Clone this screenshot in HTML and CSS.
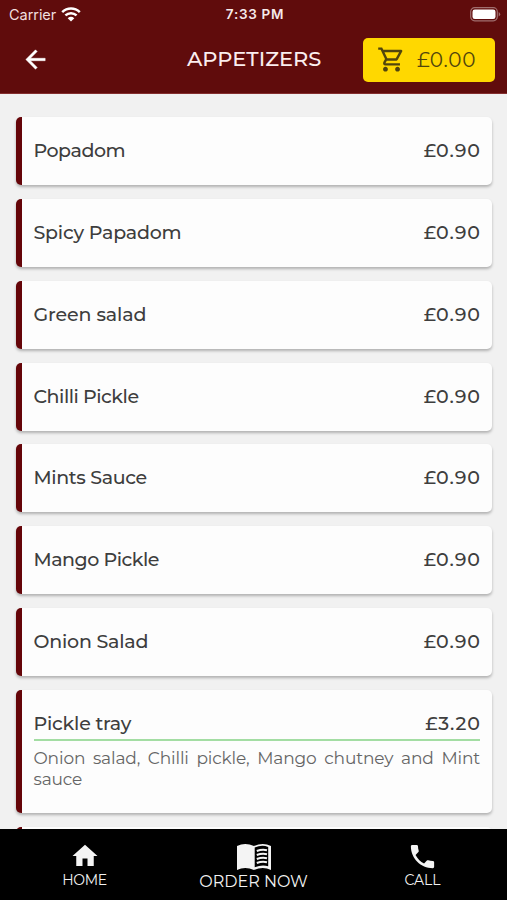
FILE: index.html
```html
<!DOCTYPE html>
<html lang="en">
<head>
<meta charset="utf-8">
<title>Appetizers</title>
<link rel="stylesheet" href="styles.css">
</head>
<body>
<header class="header">
  <div class="status">
    <div class="carrier"><span>Carrier</span>
      <svg width="20" height="15" viewBox="0 0 20 15" fill="none" stroke="#fff" stroke-width="2.5"><path d="M1.2 5.1C6.2.3 13.8.3 18.8 5.1"/><path d="M4.4 8.4C7.6 5.4 12.4 5.4 15.6 8.4"/><path d="M10 14.5 6.7 11.2Q10 8.5 13.3 11.2Z" fill="#fff" stroke="none"/></svg>
    </div>
    <time class="clock">7:33 PM</time>
    <svg class="battery" width="31" height="15" viewBox="0 0 31 15"><rect x=".7" y=".7" width="26.6" height="13.1" rx="4" fill="none" stroke="#a06e6e" stroke-width="1.2"/><rect x="2.5" y="2.5" width="23" height="9.5" rx="2.3" fill="#fff"/><path d="M28.7 5v4.5q1.5-.6 1.5-2.2T28.7 5Z" fill="#a06e6e"/></svg>
  </div>
  <div class="toolbar">
    <svg class="back" width="29" height="29" viewBox="0 0 24 24" fill="#fff" stroke="#fff" stroke-width=".4"><path d="M20 11H7.83l5.59-5.59L12 4l-8 8 8 8 1.41-1.41L7.83 13H20v-2z"/></svg>
    <h1 class="title">APPETIZERS</h1>
    <button class="cart">
      <svg width="29" height="29" viewBox="0 0 24 24" fill="#51450d"><path d="M15.55 13c.75 0 1.41-.41 1.75-1.03l3.58-6.49A.996.996 0 0 0 20.01 4H5.21l-.94-2H1v2h2l3.6 7.59-1.35 2.44C4.52 15.37 5.48 17 7 17h12v-2H7l1.1-2h7.45zM6.16 6h12.15l-2.76 5H8.53L6.16 6zM7 18c-1.1 0-1.99.9-1.99 2S5.9 22 7 22s2-.9 2-2-.9-2-2-2zm10 0c-1.1 0-1.99.9-1.99 2s.89 2 1.99 2 2-.9 2-2-.9-2-2-2z"/></svg>
      <span class="total">£0.00</span>
    </button>
  </div>
</header>
<main class="menu">
  <article class="card"><div class="row"><span class="tight">Popadom</span><span class="price">£0.90</span></div></article>
  <article class="card"><div class="row"><span>Spicy Papadom</span><span class="price">£0.90</span></div></article>
  <article class="card"><div class="row"><span class="wide">Green salad</span><span class="price">£0.90</span></div></article>
  <article class="card"><div class="row"><span class="tight">Chilli Pickle</span><span class="price">£0.90</span></div></article>
  <article class="card"><div class="row"><span class="snug">Mints Sauce</span><span class="price">£0.90</span></div></article>
  <article class="card"><div class="row"><span class="tight">Mango Pickle</span><span class="price">£0.90</span></div></article>
  <article class="card"><div class="row"><span>Onion Salad</span><span class="price">£0.90</span></div></article>
  <article class="card detailed"><div class="row"><span>Pickle tray</span><span class="price">£3.20</span></div>
    <p class="desc">Onion salad, Chilli pickle, Mango chutney and Mint sauce</p></article>
  <article class="card"></article>
</main>
<nav class="tabs">
  <a class="tab home"><svg width="30" height="30" viewBox="0 0 24 24" fill="#f4f4f4"><path d="M10 20v-6h4v6h5v-8h3L12 3 2 12h3v8z"/></svg><span>HOME</span></a>
  <a class="tab order"><svg width="36" height="28" viewBox="0 0 36 28"><path d="M1 3Q9-1 18 3 27-1 35 3V27Q27 23 18 27 9 23 1 27Z" fill="#f4f4f4"/><path d="M18.7 4.5Q26 1.5 32.2 4V23.2Q26 21.3 18.7 24.2Z" fill="#000"/><path d="M20.8 8Q26 6 31 7.2M20.8 12Q26 10 31 11.2M20.8 16Q26 14 31 15.2M20.8 20Q26 18 31 19.2" fill="none" stroke="#f4f4f4" stroke-width="2"/></svg><span>ORDER NOW</span></a>
  <a class="tab call"><svg width="31" height="31" viewBox="0 0 24 24" fill="#f4f4f4"><path d="M6.62 10.79c1.44 2.83 3.76 5.14 6.59 6.59l2.2-2.2c.27-.27.67-.36 1.02-.24 1.12.37 2.33.57 3.57.57.55 0 1 .45 1 1V20c0 .55-.45 1-1 1-9.39 0-17-7.61-17-17 0-.55.45-1 1-1h3.5c.55 0 1 .45 1 1 0 1.25.2 2.45.57 3.57.11.35.03.74-.25 1.02l-2.2 2.2z"/></svg><span>CALL</span></a>
</nav>
</body>
</html>
```
FILE: styles.css
```css
* { box-sizing: border-box; }
body { margin: 0; height: 900px; overflow: hidden; display: flex; flex-direction: column; background: #f1f1f1; font-family: Montserrat, Inter, sans-serif; color: #3e3e3e; }
.header { height: 94px; flex: none; background: #600c0c; color: #fff; border-bottom: 1px solid #842f2f; }
.status { height: 27px; display: grid; grid-template-columns: 1fr auto 1fr; align-items: center; padding: 0 6px 0 9px; font: 14.5px/27px Inter, sans-serif; }
.carrier { display: flex; align-items: center; gap: 6px; color: #f0dfdf; letter-spacing: -.05px; }
.carrier svg { margin-left: -1.5px; }
.clock { font-size: 13.5px; font-weight: 600; letter-spacing: .7px; color: #f6eaea; padding-top: 1px; }
.battery { justify-self: end; }
.toolbar { height: 66px; display: grid; grid-template-columns: 1fr 134px 174px; align-items: center; padding: 0 12px 2px 21px; }
.title { margin: 0; font-size: 21px; font-weight: 500; line-height: 26px; white-space: nowrap; color: #fbeeee; }
.cart { justify-self: end; width: 132px; height: 44px; margin-top: 1px; border: 0; border-radius: 5px; background: #ffd800; padding: 0 0 0 14px; display: flex; align-items: center; gap: 11px; font: 20px Montserrat, Inter, sans-serif; letter-spacing: .75px; color: #51450d; }
.menu { flex: 1; min-height: 0; overflow: hidden; padding: 23px 15px 0 15.5px; display: flex; flex-direction: column; gap: 13.85px; }
.card { flex: none; height: 68px; border-left: 6.5px solid #650509; border-radius: 5px; background: #fdfdfd; box-shadow: 0 2px 3px #0004; padding: 21px 12px 0; }
.row { display: flex; justify-content: space-between; font-size: 19px; font-weight: 500; line-height: 26px; letter-spacing: -.22px; }
.tight { letter-spacing: -.47px; }
.snug { letter-spacing: -.36px; }
.wide { letter-spacing: -.1px; }
.price { letter-spacing: .9px; margin-right: -.9px; }
.detailed { height: 123px; }
.detailed .row { height: 30px; border-bottom: 2px solid #a3dda3; }
.desc { margin: 7px 0 0; font-size: 17px; line-height: 21px; letter-spacing: -.15px; color: #656565; text-align: justify; }
.tabs { height: 71px; flex: none; background: #000; color: #f2f2f2; display: grid; grid-template-columns: repeat(3, 1fr); }
.tab { display: flex; flex-direction: column; align-items: center; font-size: 14px; line-height: 18px; letter-spacing: -.3px; }
.home { padding-top: 12px; }
.order { padding-top: 14px; font-size: 16px; letter-spacing: 0; }
.order span { margin-top: 2px; }
.call { padding-top: 12px; }
.call span { margin-top: -1px; letter-spacing: 0; }
```
